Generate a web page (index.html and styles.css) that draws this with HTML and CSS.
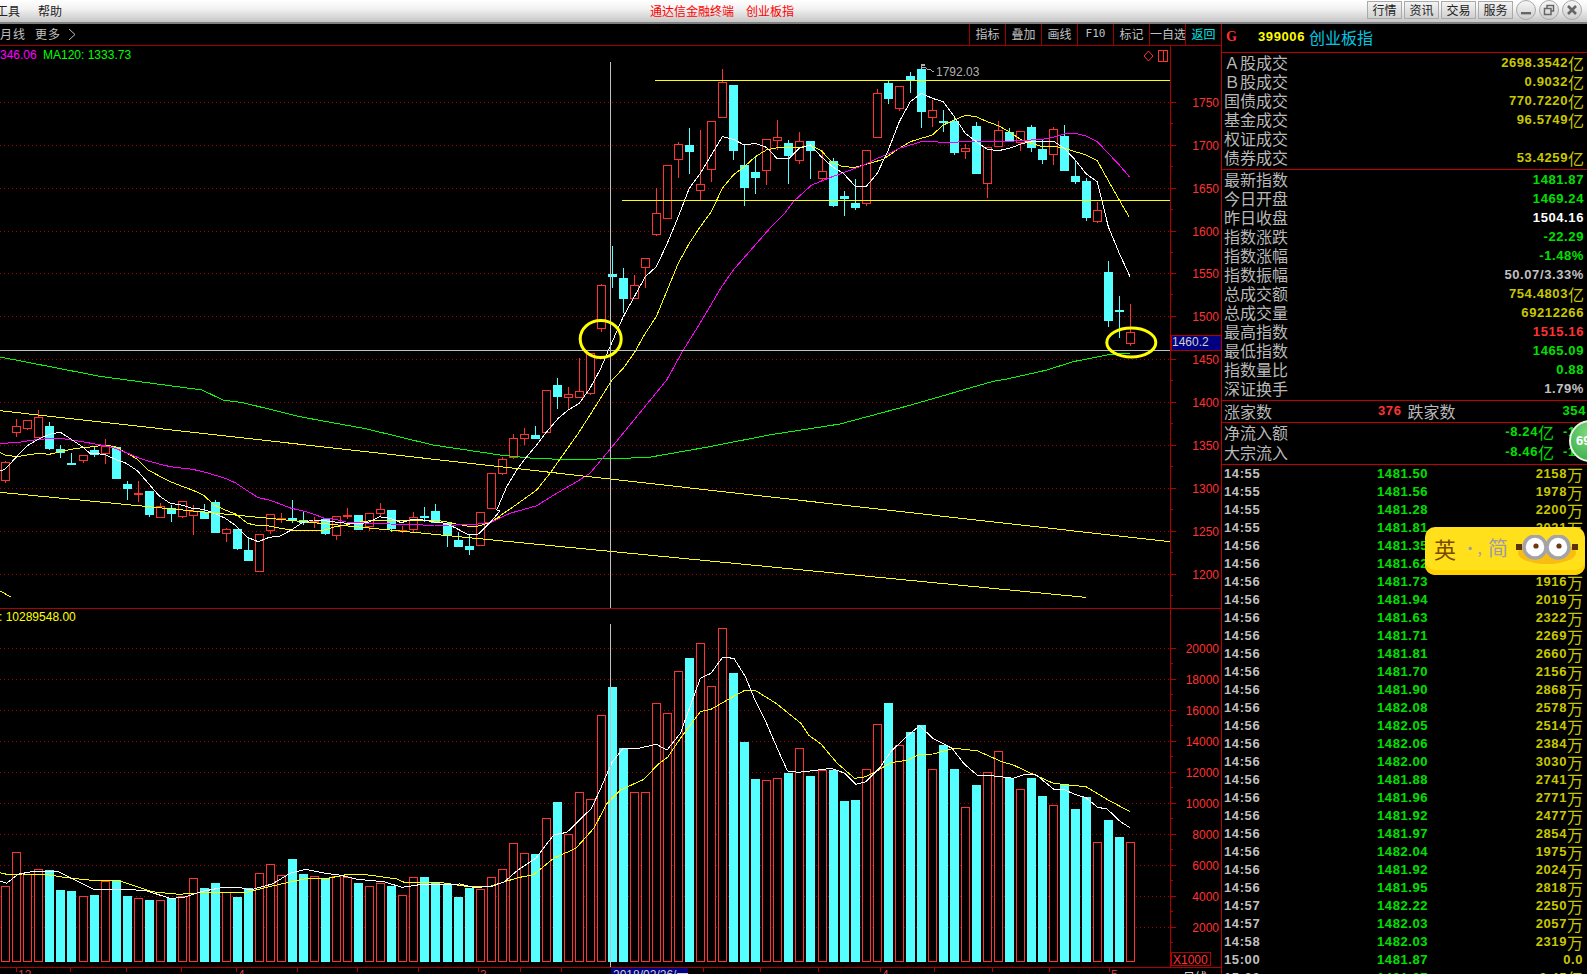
FILE: index.html
```html
<!DOCTYPE html>
<html lang="zh-CN">
<head>
  <meta charset="UTF-8">
  <title>创业板指</title>
  <link rel="stylesheet" href="styles.css">
</head>
<body>

<div class="topbar">
  <div class="menu">
    <span class="menu-item">工具</span>
    <span class="menu-item">帮助</span>
  </div>
  <div class="app-title">
    <span>通达信金融终端</span>
    <span>创业板指</span>
  </div>
  <div class="top-actions">
    <span class="top-btn">行情</span>
    <span class="top-btn">资讯</span>
    <span class="top-btn">交易</span>
    <span class="top-btn">服务</span>
    <span class="win-btn">
      <svg width="20" height="20" viewBox="0 0 20 20"><rect x="5" y="12" width="10" height="2.4" fill="#666"/></svg>
    </span>
    <span class="win-btn">
      <svg width="20" height="20" viewBox="0 0 20 20"><path d="M8 8V5.5h6.5V11H12M5.5 8.5H12V14.5H5.5Z" fill="none" stroke="#666" stroke-width="1.5"/></svg>
    </span>
    <span class="win-btn">
      <svg width="20" height="20" viewBox="0 0 20 20"><path d="M6 6l8 8M14 6l-8 8" stroke="#666" stroke-width="2.6"/></svg>
    </span>
  </div>
</div>

<div class="main">
  <div class="chart-col">
    <div class="toolbar">
      <div class="period">
        <span>月线</span>
        <span>更多</span>
        <svg class="more-arrow" width="8" height="13" viewBox="0 0 8 13"><path d="M1 1l6 5.5-6 5.5" fill="none" stroke="#c0c0c0"/></svg>
      </div>
      <div class="tools">
        <span class="tool">指标</span>
        <span class="tool">叠加</span>
        <span class="tool">画线</span>
        <span class="tool tool-f10">F10</span>
        <span class="tool">标记</span>
        <span class="tool">一自选</span>
        <span class="tool tool-back">返回</span>
      </div>
    </div>
    <svg id="chart" class="chart" width="1221" height="929" viewBox="0 46 1221 929"></svg>
  </div>

  <div class="side">
    <div class="side-head">
      <span class="side-g">G</span>
      <span class="side-code">399006</span>
      <span class="side-name">创业板指</span>
    </div>

    <div class="section section-amount">
      <div class="row"><span>Ａ股成交</span><span class="val olive">2698.3542<i>亿</i></span></div>
      <div class="row"><span>Ｂ股成交</span><span class="val olive">0.9032<i>亿</i></span></div>
      <div class="row"><span>国债成交</span><span class="val olive">770.7220<i>亿</i></span></div>
      <div class="row"><span>基金成交</span><span class="val olive">96.5749<i>亿</i></span></div>
      <div class="row"><span>权证成交</span></div>
      <div class="row"><span>债券成交</span><span class="val olive">53.4259<i>亿</i></span></div>
    </div>

    <div class="section section-index">
      <div class="row"><span>最新指数</span><span class="val green">1481.87</span></div>
      <div class="row"><span>今日开盘</span><span class="val green">1469.24</span></div>
      <div class="row"><span>昨日收盘</span><span class="val white">1504.16</span></div>
      <div class="row"><span>指数涨跌</span><span class="val green">-22.29</span></div>
      <div class="row"><span>指数涨幅</span><span class="val green">-1.48%</span></div>
      <div class="row"><span>指数振幅</span><span class="val gray">50.07/3.33%</span></div>
      <div class="row"><span>总成交额</span><span class="val olive">754.4803<i>亿</i></span></div>
      <div class="row"><span>总成交量</span><span class="val olive">69212266</span></div>
      <div class="row"><span>最高指数</span><span class="val red">1515.16</span></div>
      <div class="row"><span>最低指数</span><span class="val green">1465.09</span></div>
      <div class="row"><span>指数量比</span><span class="val green">0.88</span></div>
      <div class="row"><span>深证换手</span><span class="val gray">1.79%</span></div>
    </div>

    <div class="section section-count">
      <span class="count-label">涨家数</span>
      <span class="val red count-up">376</span>
      <span class="count-label count-down">跌家数</span>
      <span class="val green count-end">354</span>
    </div>

    <div class="section section-flow">
      <div class="row"><span>净流入额</span><span class="val green">-8.24<i>亿</i><b class="flow-cut">-1.</b></span></div>
      <div class="row"><span>大宗流入</span><span class="val green">-8.46<i>亿</i><b class="flow-cut">-1.</b></span></div>
    </div>

    <div class="ticks">
      <div class="tick"><span class="t">14:55</span><span class="p">1481.50</span><span class="v">2158<i>万</i></span></div>
      <div class="tick"><span class="t">14:55</span><span class="p">1481.56</span><span class="v">1978<i>万</i></span></div>
      <div class="tick"><span class="t">14:55</span><span class="p">1481.28</span><span class="v">2200<i>万</i></span></div>
      <div class="tick"><span class="t">14:55</span><span class="p">1481.81</span><span class="v">2021<i>万</i></span></div>
      <div class="tick"><span class="t">14:56</span><span class="p">1481.35</span><span class="v">2104<i>万</i></span></div>
      <div class="tick"><span class="t">14:56</span><span class="p">1481.62</span><span class="v">2230<i>万</i></span></div>
      <div class="tick"><span class="t">14:56</span><span class="p">1481.73</span><span class="v">1916<i>万</i></span></div>
      <div class="tick"><span class="t">14:56</span><span class="p">1481.94</span><span class="v">2019<i>万</i></span></div>
      <div class="tick"><span class="t">14:56</span><span class="p">1481.63</span><span class="v">2322<i>万</i></span></div>
      <div class="tick"><span class="t">14:56</span><span class="p">1481.71</span><span class="v">2269<i>万</i></span></div>
      <div class="tick"><span class="t">14:56</span><span class="p">1481.81</span><span class="v">2660<i>万</i></span></div>
      <div class="tick"><span class="t">14:56</span><span class="p">1481.70</span><span class="v">2156<i>万</i></span></div>
      <div class="tick"><span class="t">14:56</span><span class="p">1481.90</span><span class="v">2868<i>万</i></span></div>
      <div class="tick"><span class="t">14:56</span><span class="p">1482.08</span><span class="v">2578<i>万</i></span></div>
      <div class="tick"><span class="t">14:56</span><span class="p">1482.05</span><span class="v">2514<i>万</i></span></div>
      <div class="tick"><span class="t">14:56</span><span class="p">1482.06</span><span class="v">2384<i>万</i></span></div>
      <div class="tick"><span class="t">14:56</span><span class="p">1482.00</span><span class="v">3030<i>万</i></span></div>
      <div class="tick"><span class="t">14:56</span><span class="p">1481.88</span><span class="v">2741<i>万</i></span></div>
      <div class="tick"><span class="t">14:56</span><span class="p">1481.96</span><span class="v">2771<i>万</i></span></div>
      <div class="tick"><span class="t">14:56</span><span class="p">1481.92</span><span class="v">2477<i>万</i></span></div>
      <div class="tick"><span class="t">14:56</span><span class="p">1481.97</span><span class="v">2854<i>万</i></span></div>
      <div class="tick"><span class="t">14:56</span><span class="p">1482.04</span><span class="v">1975<i>万</i></span></div>
      <div class="tick"><span class="t">14:56</span><span class="p">1481.92</span><span class="v">2024<i>万</i></span></div>
      <div class="tick"><span class="t">14:56</span><span class="p">1481.95</span><span class="v">2818<i>万</i></span></div>
      <div class="tick"><span class="t">14:57</span><span class="p">1482.22</span><span class="v">2250<i>万</i></span></div>
      <div class="tick"><span class="t">14:57</span><span class="p">1482.03</span><span class="v">2057<i>万</i></span></div>
      <div class="tick"><span class="t">14:58</span><span class="p">1482.03</span><span class="v">2319<i>万</i></span></div>
      <div class="tick"><span class="t">15:00</span><span class="p">1481.87</span><span class="v">0.0</span></div>
      <div class="tick"><span class="t">15:00</span><span class="p">1481.87</span><span class="v">0.45<i>亿</i></span></div>
    </div>
  </div>
</div>

<div class="flow-ball">69</div>

<div class="ime-pill">
  <span class="ime-en">英</span>
  <span class="ime-dots">·,</span>
  <span class="ime-cn">简</span>
  <svg class="ime-eyes" width="62" height="30" viewBox="0 0 62 30">
    <ellipse cx="31" cy="18" rx="29" ry="11" fill="#f7bd12"/>
    <rect x="0" y="9" width="6" height="6" fill="#5a3408"/>
    <rect x="56" y="9" width="6" height="6" fill="#5a3408"/>
    <circle cx="19" cy="12" r="11" fill="#fff" stroke="#a3a3ab" stroke-width="3.5"/>
    <circle cx="42" cy="12" r="11" fill="#fff" stroke="#a3a3ab" stroke-width="3.5"/>
    <circle cx="20" cy="11" r="2.6" fill="#6b3a10"/>
    <circle cx="43" cy="11" r="2.6" fill="#6b3a10"/>
  </svg>
</div>

<script src="chart.js"></script>
</body>
</html>
```

FILE: styles.css
```css
* {
  box-sizing: border-box;
  margin: 0;
  padding: 0;
}

body {
  background-color: #000;
  color: #c0c0c0;
  font-family: "Liberation Sans", "Noto Sans CJK SC", sans-serif;
  width: 1587px;
  height: 974px;
  overflow: hidden;
  position: relative;
}

i {
  font-style: normal;
}

/* top window bar */
.topbar {
  height: 24px;
  display: flex;
  align-items: center;
  padding-bottom: 2px;
  background: linear-gradient(#fff, #f2f2f2 40%, #c6c6c6);
  border-bottom: 2px solid #808080;
  color: #222;
  font-family: "Noto Sans CJK SC", sans-serif;
  font-size: 12px;
  overflow: hidden;
}

.menu {
  display: flex;
  gap: 18px;
  margin-left: -4px;
}

.app-title {
  display: flex;
  gap: 12px;
  margin-left: 588px;
  color: #f00;
}

.top-actions {
  display: flex;
  align-items: center;
  gap: 2px;
  margin-left: auto;
  padding-right: 5px;
}

.top-btn {
  width: 35px;
  height: 18px;
  line-height: 15px;
  text-align: center;
  font-size: 12px;
  border: 1px solid #aaa;
  background: linear-gradient(#f4f4f4, #d0d0d0);
}

.win-btn {
  width: 20px;
  height: 20px;
  margin-left: 1px;
  border: 1px solid #a8a8a8;
  border-radius: 50%;
  background: linear-gradient(#f6f6f6, #cfcfcf);
  overflow: hidden;
}

.win-btn svg {
  display: block;
  margin: -1px;
}

/* main area */
.main {
  display: flex;
  height: 950px;
}

.chart-col {
  width: 1221px;
  flex-shrink: 0;
}

.toolbar {
  height: 22px;
  display: flex;
  justify-content: space-between;
  border-bottom: 1px solid #a00000;
  font-family: "Noto Sans CJK SC", sans-serif;
  font-size: 12px;
}

.period {
  display: flex;
  align-items: flex-start;
  gap: 7px;
  line-height: 20px;
  letter-spacing: 1px;
}

.period span + span {
  margin-left: 2px;
}

.more-arrow {
  margin-top: 4px;
}

.tools {
  display: flex;
}

.tool {
  width: 36px;
  line-height: 20px;
  text-align: center;
  white-space: nowrap;
  overflow: hidden;
  border-left: 1px solid #a00000;
}

.tool-f10 {
  font-family: "DejaVu Sans Mono", monospace;
  font-size: 11px;
}

.tool-back {
  color: #00e8e8;
}

.chart {
  display: block;
}

/* chart text */
.axis-label {
  font-size: 12px;
  fill: #ff3232;
}

.ma-label {
  font-size: 12px;
}

.peak-label {
  font-size: 12px;
  fill: #b0b0b0;
}

.date-label {
  font-size: 12px;
  fill: #d0d0d0;
}

.tick-label {
  font-size: 12px;
  fill: #d04040;
}

/* right panel */
.side {
  flex: 1;
  border-left: 1px solid #c00000;
  font-family: "Noto Sans CJK SC", sans-serif;
  font-size: 16px;
  overflow: hidden;
}

.side-head {
  height: 29px;
  display: flex;
  align-items: center;
  padding: 0 0 3px 4px;
  border-bottom: 1px solid #c00000;
}

.side-g {
  width: 32px;
  color: #ff3232;
  font-family: "Liberation Serif", serif;
  font-weight: bold;
  font-size: 14px;
}

.side-code {
  color: #ffff00;
  font-family: "Liberation Sans", sans-serif;
  font-weight: bold;
  font-size: 13px;
  letter-spacing: 0.6px;
}

.side-name {
  margin-left: 4px;
  color: #00c8e0;
}

.section {
  border-bottom: 1px solid #c00000;
}

.section-amount {
  height: 117px;
  padding-top: 1px;
}

.section-index {
  height: 231px;
  padding-top: 1px;
}

.row {
  height: 19px;
  line-height: 17px;
  display: flex;
  align-items: flex-start;
  justify-content: space-between;
  padding: 0 3px 0 2px;
  color: #b8b8b8;
}

.val {
  display: flex;
  align-items: center;
  flex-shrink: 0;
  height: 17px;
  font-family: "Liberation Sans", sans-serif;
  font-weight: bold;
  font-size: 13px;
  letter-spacing: 0.6px;
}

.val i {
  font-family: "Noto Sans CJK SC", sans-serif;
  font-weight: normal;
  font-size: 16px;
  line-height: 16px;
  letter-spacing: 0;
}

.olive { color: #c8c800; }
.green { color: #00e000; }
.white { color: #fff; }
.gray { color: #c0c0c0; }
.red { color: #ff3232; }

.section-count {
  height: 22px;
  display: flex;
  align-items: center;
  padding: 0 0 2px 2px;
}

.count-label {
  color: #b8b8b8;
  line-height: 18px;
}

.count-up {
  margin-left: 106px;
}

.count-down {
  margin-left: 6px;
}

.count-end {
  margin-left: auto;
  padding-right: 1px;
}

.section-flow {
  height: 42px;
}

.section-flow .row {
  height: 20px;
  line-height: 18px;
  padding-right: 0;
}

.flow-cut {
  width: 24px;
  margin-left: 9px;
  white-space: nowrap;
}

.tick {
  height: 18px;
  line-height: 18px;
  display: flex;
  padding: 0 4px 0 2px;
  font-family: "Liberation Sans", sans-serif;
  font-weight: bold;
  font-size: 13px;
  letter-spacing: 0.6px;
}

.t {
  width: 153px;
  color: #c0c0c0;
}

.p {
  color: #00e000;
}

.v {
  display: flex;
  align-items: center;
  margin-left: auto;
  color: #c8c800;
}

.v i {
  font-family: "Noto Sans CJK SC", sans-serif;
  font-weight: normal;
  font-size: 16px;
  line-height: 16px;
  letter-spacing: 0;
}

/* things floating over the panel */
.flow-ball {
  position: absolute;
  left: 1569px;
  top: 420px;
  width: 42px;
  height: 42px;
  padding-left: 5px;
  line-height: 38px;
  border: 2px solid #e8f4e8;
  border-radius: 50%;
  background: radial-gradient(circle at 50% 30%, #7fdc7f, #35a845);
  color: #fff;
  font-weight: bold;
  font-size: 13px;
}

.ime-pill {
  position: absolute;
  left: 1425px;
  top: 527px;
  width: 160px;
  height: 48px;
  display: flex;
  align-items: center;
  padding: 0 8px 7px 9px;
  border-radius: 10px;
  background: #ffe01a;
  box-shadow: inset 0 -5px 0 #ffd000;
  font-family: "Noto Sans CJK SC", sans-serif;
}

.ime-en {
  color: #7b4a00;
  font-size: 22px;
}

.ime-dots {
  width: 32px;
  text-align: center;
  color: #9c9cac;
  font-size: 15px;
}

.ime-cn {
  color: #9c9cac;
  font-size: 20px;
}

.ime-eyes {
  position: absolute;
  left: 91px;
  top: 8px;
}
```

FILE: chart.js
```js
// positions read off the screenshot, kept in page pixels
const NS = "http://www.w3.org/2000/svg";
const svg = document.getElementById("chart");

const RED = "#ff3232";
const CYAN = "#55ffff";
const GRID = "#a80000";
const LINE = "#b00000";

function add(tag, attrs, text) {
  const el = document.createElementNS(NS, tag);
  for (const k in attrs) el.setAttribute(k, attrs[k]);
  if (text !== undefined) el.textContent = text;
  svg.appendChild(el);
  return el;
}

function hline(x1, x2, y, color, extra) {
  add("line", Object.assign({ x1, x2, y1: y, y2: y, stroke: color, "shape-rendering": "crispEdges" }, extra));
}

function vline(x, y1, y2, color) {
  add("line", { x1: x, x2: x, y1, y2, stroke: color, "shape-rendering": "crispEdges" });
}

function poly(points, color) {
  add("polyline", {
    points: points.map(p => p[0].toFixed(1) + "," + p[1].toFixed(1)).join(" "),
    fill: "none",
    stroke: color,
    "shape-rendering": "crispEdges"
  });
}

// points measured on zoomed crops: x scale, origin
function crop(pts, x0, y0, sx) {
  const k = sx || 3;
  return pts.map(p => [p[0] / k + x0, p[1] / 3 + y0]);
}

const barX = i => Math.round(5.3 + 11.03 * i);

/* grid */
const priceLabels = [1750, 1700, 1650, 1600, 1550, 1500, 1450, 1400, 1350, 1300, 1250, 1200];
priceLabels.forEach((p, k) => {
  const y = Math.floor(102.3 + 42.92 * k) + 0.5;
  hline(0, 1170, y, GRID, { "stroke-dasharray": "1 3" });
  hline(1171, 1176, y, LINE);
  hline(1171, 1173, y + 21, LINE);
  add("text", { x: 1219, y: y + 4, "text-anchor": "end", class: "axis-label" }, p);
});

const volLabels = [20000, 18000, 16000, 14000, 12000, 10000, 8000, 6000, 4000, 2000];
volLabels.forEach((v, k) => {
  const y = Math.floor(648.3 + 31.02 * k) + 0.5;
  hline(0, 1170, y, GRID, { "stroke-dasharray": "1 3" });
  hline(1171, 1176, y, LINE);
  hline(1171, 1173, y + 15, LINE);
  add("text", { x: 1219, y: y + 4, "text-anchor": "end", class: "axis-label" }, v);
});

/* candles: up, high, body top, body bottom, low */
const candlesA = [
  [1,182,187,239,248],[1,57,77,95,110],[1,60,61,83,90],[1,30,52,110,115],[0,67,78,143,150],
  [0,135,147,157,173],[0,160,189,191,193],[1,165,166,179,189],[0,140,150,162,170],[1,118,139,158,192],
  [0,140,141,233,236],[0,243,252,263,300],[1,243,280,282,305],[0,272,273,342,350],[1,310,319,350,351],
  [0,316,325,339,366],[1,303,304,347,353],[1,316,332,344,405],[0,312,335,354,355],[0,300,306,396,398],
  [1,385,388,398,426],[0,387,387,443,450],[0,413,450,480,484],[1,403,403,512,513],[1,342,343,391,402],
  [1,340,355,358,368],[0,300,354,358,368],[0,336,360,366,375],[1,352,363,367,384],[0,355,357,398,404],
  [1,349,349,406,419],[1,324,344,346,357],[0,345,345,386,390],[1,340,340,377,392],[1,310,328,338,348],
  [0,330,330,384,395],[1,378,390,392,400],[1,337,352,386,396],[0,322,348,351,365],[0,312,334,366,370],
  [0,365,368,405,440],[0,395,420,438,438],[0,405,438,446,465],[1,337,337,434,435]
].map(c => [c[0], c[1] / 3 + 400, c[2] / 3 + 400, c[3] / 3 + 400, c[4] / 3 + 400]);

const candlesB = [
  [1,400,400,505,505],[1,350,358,400,405],[1,282,295,352,356],[1,265,283,295,315],[0,258,285,293,296],
  [1,150,151,277,278],[0,114,135,167,207],[1,141,162,170,210],[1,54,154,172,174],[1,40,40,160,164]
].map(c => [c[0], c[1] / 3 + 340, c[2] / 3 + 340, c[3] / 3 + 340, c[4] / 3 + 340]);

const candlesC = [
  [1,672,676,803,815],[0,558,643,647,684],[0,625,655,713,760],[1,645,676,713,714],[1,595,595,620,684],
  [1,384,460,521,527],[1,316,316,473,476],[1,246,253,296,354],[0,205,255,273,343],[1,210,373,389,420],
  [1,184,184,326,366],[1,27,67,170,170],[0,75,75,270,300],[0,255,315,381,438],[0,290,336,351,402],
  [1,238,238,329,375],[1,180,232,239,270],[0,240,249,285,372],[1,216,244,299,312],[0,243,243,270,357],
  [1,270,334,353,360],[0,295,303,435,441],[0,393,408,414,468],[0,357,429,441,450],[1,270,271,429,438],
  [1,87,100,230,230],[0,62,69,114,132],[1,78,79,143,152],
  [0,37,48,56,98],[0,15,27,152,204],[1,120,151,170,200],[0,150,183,186,215],[0,170,182,275,285],
  [1,252,265,274,297],[0,186,198,339,339],[1,262,262,368,414],[1,183,211,257,260],[0,205,216,243,243],
  [1,214,214,245,272],[0,195,201,260,277],[0,240,267,297,312],[1,202,208,281,315],[0,195,228,329,332],
  [0,300,348,362,372],[0,355,363,470,482],[1,426,451,482,488],[0,603,636,779,800],[0,708,750,754,833],
  [1,732,815,848,857]
].map(c => [c[0], c[1] / 3 + 60, c[2] / 3 + 60, c[3] / 3 + 60, c[4] / 3 + 60]);

const candles = candlesA.concat(candlesB, candlesC);

candles.forEach((c, i) => {
  const x = barX(i);
  const color = c[0] ? RED : CYAN;
  vline(x + 0.5, c[1], c[4], color);
  const top = Math.round(c[2]);
  const h = Math.max(Math.round(c[3]) - top, 1);
  if (c[0]) {
    add("rect", { x: x - 3.5, y: top + 0.5, width: 8, height: h, fill: "#000", stroke: RED, "shape-rendering": "crispEdges" });
  } else {
    add("rect", { x: x - 4, y: top, width: 9, height: h + 1, fill: CYAN, "shape-rendering": "crispEdges" });
  }
});

/* volume bars, top edge per bar */
const volA = [318,216,282,267,270,330,333,349,345,303,300,348,355,360,360,355,348,295,324,309,336,351,324,280,253,286,237,282,289,296,288,290,309,319,309,318,346,292,291,310,315,351,324,328,292,268,190,220,222,115,66,163,37,58];
const volB = [315,231,414,547,547,280,310,184,144,100,229,55,189,396,507,511,505,488,415,498,481,479,573,570,478,343,279,406,366,345,478,405,477,592,525,487,424,505,538,503,558,585,523,597,561,697,630,681,697];
const volTops = volA.map(v => v / 3 + 780).concat(volB.map(v => v / 3 + 610));

volTops.forEach((t, i) => {
  const x = barX(i);
  const top = Math.round(t);
  if (candles[i][0]) {
    add("rect", { x: x - 3.5, y: top + 0.5, width: 8, height: 961 - top, fill: "#000", stroke: RED, "shape-rendering": "crispEdges" });
  } else {
    add("rect", { x: x - 4, y: top, width: 9, height: 962 - top, fill: CYAN, "shape-rendering": "crispEdges" });
  }
});

/* moving averages */
const white = crop([[0,213],[15,208],[50,170],[80,138],[115,118],[148,103],[181,97],[214,118],[247,140],[270,160],[313,163],[346,178],[379,190],[412,212],[445,250],[478,288],[511,310],[544,315],[577,325],[610,328],[643,340],[676,355],[709,378],[742,412],[775,425],[808,412],[841,408],[874,390],[907,368],[940,360],[973,362],[1006,366],[1039,370],[1072,372],[1105,367],[1138,350],[1171,355],[1204,368],[1237,358],[1270,360],[1303,366],[1336,370],[1369,385],[1402,403],[1435,402],[1468,370],[1500,333]], 0, 400)
  .concat(crop([[20,510],[50,440],[80,390],[110,350],[140,315],[170,275],[205,235],[235,210],[268,190],[300,145],[330,90]], 490, 340))
  .concat(crop([[330,860],[370,770],[403,710],[436,650],[469,620],[502,550],[535,470],[568,385],[601,340],[634,285],[667,230],[700,238],[733,255],[766,250],[799,262],[832,296],[865,297],[898,265],[931,255],[964,290],[997,320],[1030,340]], 500, 60))
  .concat(crop([[46,379],[79,379],[112,340],[145,270],[178,185],[211,125],[244,100],[277,115],[310,125],[343,170],[376,220],[409,245],[442,268],[475,272],[508,265],[541,253],[574,243],[607,243],[640,243],[673,265],[706,300],[739,342],[772,365],[805,500],[838,580],[871,652]], 840, 60));

const yellow = crop([[0,157],[15,165],[50,170],[115,160],[148,163],[181,155],[214,148],[247,143],[280,140],[313,135],[346,140],[379,158],[412,178],[445,210],[478,228],[511,245],[544,258],[577,270],[610,285],[643,315],[676,330],[709,343],[742,370],[775,377],[808,378],[841,385],[874,390],[907,390],[940,390],[973,390],[1006,380],[1039,375],[1072,367],[1105,363],[1138,360],[1171,360],[1204,360],[1237,360],[1270,360],[1303,360],[1336,365],[1369,372],[1402,378],[1435,378],[1468,368],[1500,350]], 0, 400)
  .concat(crop([[0,548],[70,500],[140,450],[180,400],[215,350],[265,280],[300,225]], 490, 340))
  .concat(crop([[336,960],[370,925],[403,878],[436,820],[469,770],[502,690],[535,610],[568,550],[601,500],[634,455],[667,385],[700,345],[733,320],[766,290],[799,270],[832,263],[865,263],[898,263],[931,255],[964,272],[997,308],[1030,320]], 500, 60))
  .concat(crop([[46,322],[79,313],[130,298],[178,265],[211,245],[277,225],[310,195],[343,180],[376,166],[409,170],[442,185],[475,197],[508,215],[541,238],[574,250],[607,260],[640,258],[673,265],[706,275],[739,285],[772,302],[805,362],[838,420],[868,472]], 840, 60));

const magenta = crop([[0,130],[50,128],[115,118],[148,116],[181,115],[247,125],[313,137],[346,145],[379,158],[412,172],[445,183],[478,192],[511,200],[544,204],[577,208],[610,215],[643,225],[676,235],[709,250],[742,272],[775,293],[808,300],[841,312],[874,325],[907,332],[940,342],[973,355],[1006,358],[1039,366],[1072,367],[1105,370],[1138,370],[1171,372],[1204,373],[1237,373],[1270,375],[1303,375],[1336,376],[1369,375],[1402,373],[1435,372],[1468,366],[1470,366]], 0, 400)
  .concat(crop([[0,548],[60,520],[140,497],[200,460],[260,425],[300,400],[350,340]], 490, 340))
  .concat(crop([[500,960],[550,870],[600,790],[665,680],[700,630],[735,590],[770,550],[805,510],[850,465],[880,425],[935,375],[997,350]], 500, 60))
  .concat(crop([[46,325],[79,312],[112,295],[145,282],[178,265],[211,255],[244,245],[277,244],[310,248],[376,245],[442,245],[508,245],[541,240],[574,240],[607,238],[640,232],[673,222],[706,220],[739,228],[772,245],[805,280],[838,315],[868,350]], 840, 60));

const green = [[0,357],[101,376.5],[202,390],[223,400],[243,402.7],[300,416.7],[367,429],[433,445],[500,455],[507,455.7],[530,458],[573,460],[597,459],[648,457.5],[708,447],[769,435],[840,424],[911,405],[992,381.6],[1007,379],[1047,370],[1073,361.7],[1107,355],[1130,353]];

poly(green, "#00ff00");
poly(yellow, "#ffff00");
poly(magenta, "#ff00ff");
poly(white, "#ffffff");

/* volume averages */
poly(crop([[0,278],[15,283],[50,282],[110,285],[150,293],[205,301],[265,301],[340,335],[400,343],[450,338],[550,338],[610,318],[680,297],[735,295],[775,284],[820,284],[890,297],[905,307],[990,308],[1040,318],[1100,318],[1160,293],[1195,284],[1240,235],[1290,205],[1330,145],[1360,70],[1390,30],[1434,3]], 0, 780, 2.24)
  .concat(crop([[0,630],[30,562],[60,535],[115,508],[150,465],[178,440],[210,385],[262,305],[290,298],[340,265],[375,243],[405,241],[460,280],[525,340],[545,375],[578,403],[620,460],[665,505],[695,500],[720,485],[760,458],[805,450],[835,433],[870,432],[925,415],[985,422],[1050,455],[1080,465],[1130,492],[1185,520],[1225,525],[1270,530],[1320,565],[1385,605]], 600, 610, 2.613).slice(3)), "#ffff00");

poly(crop([[0,303],[15,310],[40,283],[70,275],[130,274],[160,295],[210,328],[240,330],[280,327],[330,333],[380,355],[410,353],[450,335],[500,322],[540,323],[560,330],[610,312],[650,280],[685,268],[730,280],[760,285],[800,298],[860,305],[900,322],[940,314],[1030,312],[1060,322],[1100,320],[1130,305],[1160,270],[1200,235],[1240,165],[1270,157],[1325,85]], 0, 780, 2.24)
  .concat(crop([[0,540],[30,460],[60,415],[100,415],[147,403],[175,420],[210,370],[262,205],[290,190],[320,142],[350,145],[380,200],[405,270],[435,340],[465,420],[490,483],[520,487],[570,480],[605,475],[640,490],[668,523],[695,515],[730,475],[760,425],[800,380],[835,347],[870,385],[920,415],[950,460],[985,495],[1030,498],[1080,505],[1110,493],[1140,495],[1185,537],[1215,540],[1240,553],[1270,563],[1300,592],[1325,597],[1360,635],[1385,653]], 600, 610, 2.613)), "#ffffff");

/* drawn trend lines */
hline(655, 1170, 80.5, "#ffff00");
hline(622, 1170, 200.5, "#ffff00");
add("line", { x1: 0, y1: 410.7, x2: 1170, y2: 541.7, stroke: "#ffff00", "shape-rendering": "crispEdges" });
add("line", { x1: 0, y1: 492.3, x2: 1086, y2: 597.4, stroke: "#ffff00", "shape-rendering": "crispEdges" });
add("line", { x1: 0, y1: 591, x2: 11, y2: 597, stroke: "#ffff00", "shape-rendering": "crispEdges" });

/* crosshair */
vline(610.5, 62, 608, "#c0c0c0");
vline(610.5, 624, 967, "#c0c0c0");
hline(0, 1170, 350.5, "#c0c0c0");

/* circled spots */
add("ellipse", { cx: 600.7, cy: 339, rx: 20.5, ry: 18.5, fill: "none", stroke: "#ffff00", "stroke-width": 3 });
add("ellipse", { cx: 1131.3, cy: 342.5, rx: 24.5, ry: 14.5, fill: "none", stroke: "#ffff00", "stroke-width": 3 });

/* frame lines */
vline(1170.5, 46, 967, LINE);
hline(0, 1221, 608.5, LINE);
hline(0, 1221, 967.5, LINE);

/* price readout */
add("rect", { x: 1171, y: 335.5, width: 50, height: 15, fill: "#000080", stroke: LINE, "shape-rendering": "crispEdges" });
add("text", { x: 1172, y: 346, class: "date-label" }, "1460.2");

/* volume unit */
add("rect", { x: 1171.5, y: 952.5, width: 39, height: 13, fill: "#000", stroke: LINE, "shape-rendering": "crispEdges" });
add("text", { x: 1173, y: 964, class: "axis-label" }, "X1000");

/* corner marks */
add("path", { d: "M1148.5 51l4.5 5-4.5 5-4.5-5z", fill: "none", stroke: RED });
add("rect", { x: 1158.5, y: 50.5, width: 9, height: 11, fill: "none", stroke: RED, "shape-rendering": "crispEdges" });
vline(1163.5, 50, 62, RED);

/* legends */
add("text", { x: 0, y: 59, class: "ma-label", fill: "#ff00ff" }, "346.06");
add("text", { x: 43, y: 59, class: "ma-label", fill: "#00ff00" }, "MA120: 1333.73");
add("text", { x: -1, y: 621, class: "ma-label", fill: "#ffff00" }, ": 10289548.00");

/* peak price */
add("path", { d: "M922 67h3l2 2h3l2 2h2", fill: "none", stroke: "#b0b0b0", "shape-rendering": "crispEdges" });
add("path", { d: "M921 68v-3h3v-1h-3", fill: "none", stroke: "#b0b0b0", "shape-rendering": "crispEdges" });
add("text", { x: 936, y: 76, class: "peak-label" }, "1792.03");

/* date axis */
[16, 70, 126, 181, 236, 297, 357, 418, 478, 520, 561, 703, 760, 818, 880, 934, 992, 1049, 1109].forEach(x => {
  vline(x + 0.5, 968, 972, LINE);
});
[[18, "12"], [238, "4"], [480, "3"], [882, "4"], [1111, "5"]].forEach(l => {
  add("text", { x: l[0], y: 979, class: "tick-label" }, l[1]);
});
add("rect", { x: 611, y: 968, width: 77, height: 8, fill: "#000080" });
add("text", { x: 613, y: 979, class: "date-label" }, "2018/02/26/一");
add("text", { x: 1183, y: 982, class: "date-label" }, "日线");
```
